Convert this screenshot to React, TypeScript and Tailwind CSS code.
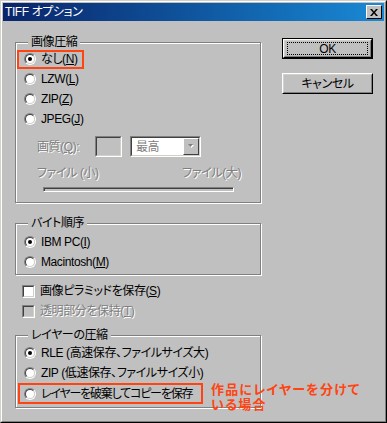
import type { ReactNode } from 'react';

const font = "font-['Liberation_Sans','Noto_Sans_CJK_JP',sans-serif] [font-feature-settings:'palt']";
const dim = 'text-[#808080] [text-shadow:1px_1px_0_#fff]';

function Radio({ on }: { on?: boolean }) {
  return (
    <span className="flex h-[12px] w-[12px] shrink-0 rounded-full border border-t-[#808080] border-l-[#808080] border-b-white border-r-white">
      <span className="flex flex-1 items-center justify-center rounded-full border border-t-[#404040] border-l-[#404040] border-b-[#d4d0c8] border-r-[#d4d0c8] bg-white">
        {on && <span className="h-[4px] w-[4px] rounded-full bg-black" />}
      </span>
    </span>
  );
}

function Check({ disabled }: { disabled?: boolean }) {
  return (
    <span className="flex h-[13px] w-[13px] shrink-0 border border-t-[#808080] border-l-[#808080] border-b-white border-r-white">
      <span
        className={`flex-1 border border-t-[#404040] border-l-[#404040] border-b-[#d4d0c8] border-r-[#d4d0c8] ${
          disabled ? 'bg-[#c0c0c0]' : 'bg-white'
        }`}
      />
    </span>
  );
}

function Group({ label, className, children }: { label: string; className: string; children: ReactNode }) {
  return (
    <div
      className={`relative border border-[#808080] shadow-[inset_1px_1px_0_#fff,1px_1px_0_#fff] ${className}`}
    >
      <span className="absolute -top-[8px] left-[12px] bg-[#c0c0c0] px-[3px] text-[12px] leading-[14px]">{label}</span>
      {children}
    </div>
  );
}

function RadioRow({ on, children }: { on?: boolean; children: ReactNode }) {
  return (
    <div className="flex h-[20px] items-center gap-[5px] whitespace-nowrap pl-[8px]">
      <Radio on={on} />
      <span>{children}</span>
    </div>
  );
}

function Button({ def, children }: { def?: boolean; children: ReactNode }) {
  return (
    <div className={`h-[21px] w-[91px] ${def ? 'border border-black' : ''}`}>
      <div className="h-full border border-t-white border-l-white border-b-black border-r-black">
        <div className="flex h-full items-center justify-center border border-t-[#d4d0c8] border-l-[#d4d0c8] border-b-[#808080] border-r-[#808080]">
          {def ? (
            <span className="flex h-[13px] w-[81px] items-center justify-center border border-dotted border-black text-[12px]">
              {children}
            </span>
          ) : (
            <span className="text-[12px]">{children}</span>
          )}
        </div>
      </div>
    </div>
  );
}

export default function App() {
  return (
    <div className={`${font} h-[423px] w-[387px] border border-t-[#d4d0c8] border-l-[#d4d0c8] border-b-black border-r-black bg-[#c0c0c0] text-[12px] leading-[14px] tracking-[-0.4px] text-black`}>
      <div className="h-full border border-t-white border-l-white border-b-[#808080] border-r-[#808080] p-[1px]">
        <div className="flex h-[18px] items-center justify-between bg-gradient-to-r from-[#0a246a] to-[#1a8ad6] pl-[2px] pr-[2px]">
          <span className="text-[12px] text-white">TIFF オプション</span>
          <div className="flex h-[14px] w-[16px] items-center justify-center border border-t-white border-l-white border-b-black border-r-black bg-[#c0c0c0]">
            <svg width="8" height="7" viewBox="0 0 8 7">
              <path d="M0 0h2l2 2.5L6 0h2L5 3.5 8 7H6L4 4.5 2 7H0l3-3.5z" fill="#000" />
            </svg>
          </div>
        </div>

        <div className="flex pl-[12px]">
          <div className="w-[246px] shrink-0 pt-[21px]">
            <Group label="画像圧縮" className="h-[161px] pt-[6px]">
              <div className="flex h-[20px] items-center">
                <div className="ml-[1px] flex h-[19px] items-center gap-[5px] border-2 border-[#ff4411] pl-[5px] pr-[4px]">
                  <Radio on />
                  <span>なし(<u>N</u>)</span>
                </div>
              </div>
              <RadioRow>LZW(<u>L</u>)</RadioRow>
              <RadioRow>ZIP(<u>Z</u>)</RadioRow>
              <RadioRow>JPEG(<u>J</u>)</RadioRow>
              <div className="mt-[7px] flex h-[21px] items-center pl-[21px]">
                <span className={`w-[58px] ${dim}`}>画質(<u>Q</u>):</span>
                <span className="h-[21px] w-[27px] border border-t-[#808080] border-l-[#808080] border-b-white border-r-white">
                  <span className="block h-full border border-t-[#404040] border-l-[#404040] border-b-[#d4d0c8] border-r-[#d4d0c8]" />
                </span>
                <span className="ml-[8px] flex h-[21px] w-[71px] border border-t-[#808080] border-l-[#808080] border-b-white border-r-white">
                  <span className="flex flex-1 items-center border border-t-[#404040] border-l-[#404040] border-b-[#d4d0c8] border-r-[#d4d0c8] bg-white">
                    <span className={`flex-1 pl-[4px] ${dim}`}>最高</span>
                    <span className="flex h-full w-[16px] items-center justify-center border border-t-white border-l-white border-b-[#404040] border-r-[#404040] bg-[#c0c0c0]">
                      <svg width="7" height="5" viewBox="0 0 7 5">
                        <path d="M1 1h5L3.5 4z" fill="#fff" />
                        <path d="M0 0h5L2.5 3z" fill="#808080" />
                      </svg>
                    </span>
                  </span>
                </span>
              </div>
              <div className={`mt-[9px] flex h-[14px] justify-between pl-[21px] pr-[19px] ${dim}`}>
                <span>ファイル (小)</span>
                <span>ファイル(大)</span>
              </div>
              <div className="ml-[27px] mt-[7px] h-[5px] w-[191px] border border-t-[#808080] border-l-[#808080] border-b-white border-r-white shadow-[inset_1px_1px_0_#404040]" />
            </Group>

            <Group label="バイト順序" className="mt-[20px] h-[52px] pt-[8px]">
              <RadioRow on>IBM PC(<u>I</u>)</RadioRow>
              <RadioRow>Macintosh(<u>M</u>)</RadioRow>
            </Group>

            <div className="mt-[6px] flex h-[20px] items-center gap-[5px] pl-[7px]">
              <Check />
              <span>画像ピラミッドを保存(<u>S</u>)</span>
            </div>
            <div className="flex h-[20px] items-center gap-[5px] pl-[7px]">
              <Check disabled />
              <span className={dim}>透明部分を保持(<u>T</u>)</span>
            </div>

            <Group label="レイヤーの圧縮" className="mt-[14px] h-[73px] pt-[7px]">
              <RadioRow on>RLE (高速保存、ファイルサイズ大)</RadioRow>
              <RadioRow>ZIP (低速保存、ファイルサイズ小)</RadioRow>
              <div className="ml-[2px] flex h-[21px] w-[185px] items-center gap-[5px] whitespace-nowrap border-2 border-[#ff4411] pl-[4px]">
                <Radio />
                <span className="tracking-[-1.2px]">レイヤーを破棄してコピーを保存</span>
              </div>
              <div className="absolute left-[195px] top-[46px] w-[170px] whitespace-nowrap text-[13px] font-bold leading-[15px] tracking-[1.2px] text-[#ff4411]">
                作品にレイヤーを分けて
                <br />
                いる場合
              </div>
            </Group>
          </div>

          <div className="ml-[21px] flex flex-col pt-[17px]">
            <Button def>OK</Button>
            <div className="mt-[14px]">
              <Button>キャンセル</Button>
            </div>
          </div>
        </div>
      </div>
    </div>
  );
}
